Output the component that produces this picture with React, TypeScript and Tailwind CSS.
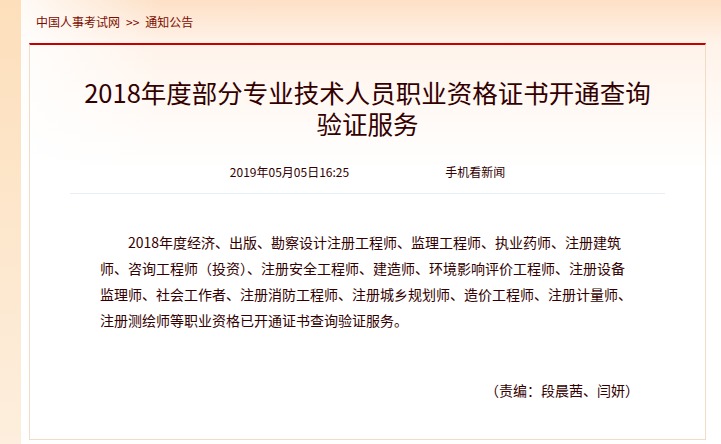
export default function App() {
  const lines = [
    "2018年度经济、出版、勘察设计注册工程师、监理工程师、执业药师、注册建筑",
    "师、咨询工程师（投资）、注册安全工程师、建造师、环境影响评价工程师、注册设备",
    "监理师、社会工作者、注册消防工程师、注册城乡规划师、造价工程师、注册计量师、",
    "注册测绘师等职业资格已开通证书查询验证服务。",
  ];

  return (
    <div className="flex h-[444px] w-full overflow-hidden font-['Noto_Sans_CJK_SC','Noto_Sans',sans-serif]">
      {/* left strip */}
      <div className="w-[21px] shrink-0 bg-[linear-gradient(to_bottom,#fddfbb,#fdeedd)]" />

      <div className="flex flex-1 flex-col bg-[linear-gradient(to_right,rgba(255,255,255,0.85),rgba(255,255,255,0)_140px),linear-gradient(to_bottom,#fde0c6,#fff3ea_45px,#ffffff_170px)]">
        {/* breadcrumb */}
        <div className="flex h-[43px] items-center pl-[15px] text-[12px] text-[#7c0d00]">
          <span>中国人事考试网</span>
          <span className="mx-[6px]">&gt;&gt;</span>
          <span>通知公告</span>
        </div>

        {/* article box */}
        <div className="ml-[8px] w-[677px] h-[397px] border-t-2 border-t-[#c40000] border-x border-b border-x-[#f1dcc6] border-b-[#f1dcc6] text-[#330000]">
          <h1 className="mt-[31px] px-[20px] text-center text-[25.5px] leading-[31px] font-normal">
            2018年度部分专业技术人员职业资格证书开通查询
            <br />
            验证服务
          </h1>

          <div className="mt-[24px] flex justify-center gap-[96px] text-[12px] leading-[20px]">
            <span>2019年05月05日16:25</span>
            <span>手机看新闻</span>
          </div>

          <div className="mx-[40px] mt-[11px] h-px bg-[#e8eef4]" />

          <div className="mt-[35px] pl-[70px] text-[14px] leading-[26px]">
            {lines.map((l, i) => (
              <div key={i} className={i === 0 ? "whitespace-nowrap pl-[28px]" : "whitespace-nowrap"}>
                {l}
              </div>
            ))}
          </div>

          <div className="mt-[44px] pr-[66px] text-right text-[14px] leading-[26px]">
            （责编：段晨茜、闫妍）
          </div>
        </div>
      </div>
    </div>
  );
}
